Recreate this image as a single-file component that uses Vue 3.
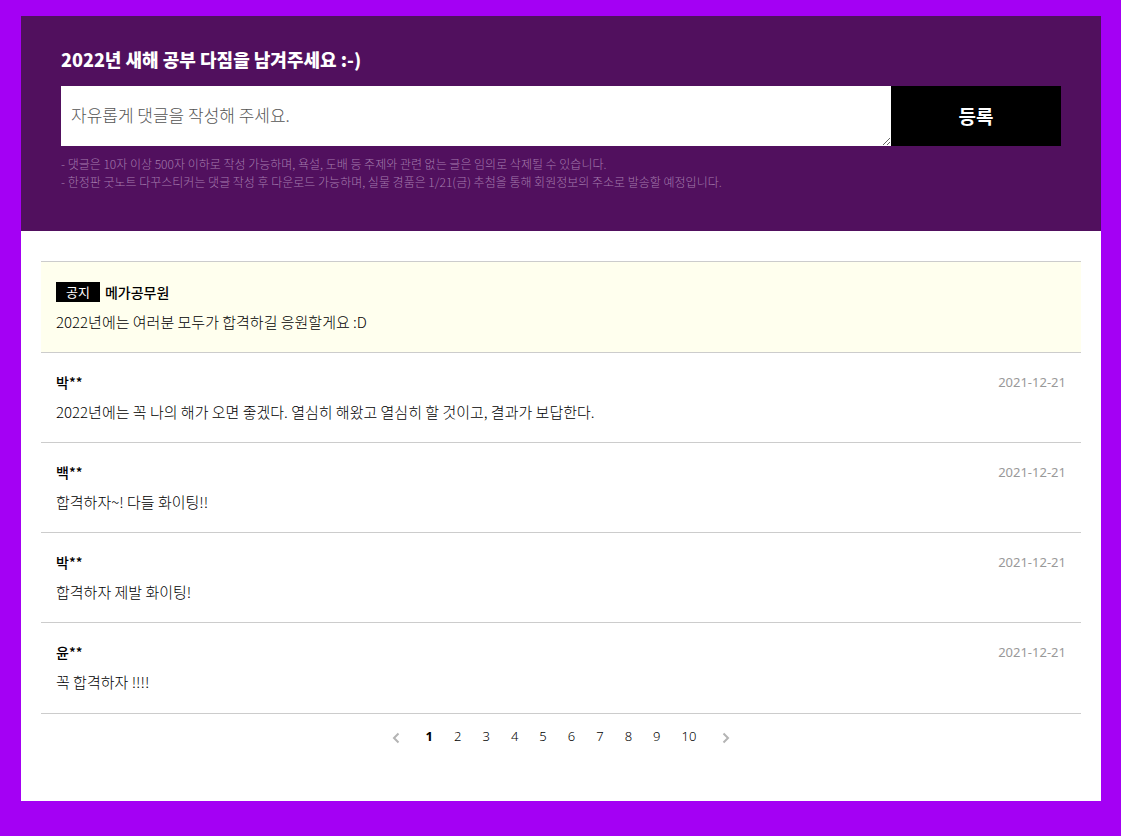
<script setup>
import { ref } from 'vue'

const draft = ref('')
const page = ref(1)
const pages = [1, 2, 3, 4, 5, 6, 7, 8, 9, 10]
const comments = [
  { name: '메가공무원', text: '2022년에는 여러분 모두가 합격하길 응원할게요 :D', notice: true },
  { name: '박**', text: '2022년에는 꼭 나의 해가 오면 좋겠다. 열심히 해왔고 열심히 할 것이고, 결과가 보답한다.', date: '2021-12-21' },
  { name: '백**', text: '합격하자~! 다들 화이팅!!', date: '2021-12-21' },
  { name: '박**', text: '합격하자 제발 화이팅!', date: '2021-12-21' },
  { name: '윤**', text: '꼭 합격하자 !!!!', date: '2021-12-21' }
]
</script>

<template>
  <main class="board">
    <form class="write" @submit.prevent>
      <label class="title" for="comment">2022년 새해 공부 다짐을 남겨주세요 :-)</label>
      <div class="field">
        <textarea id="comment" v-model="draft" class="box" placeholder="자유롭게 댓글을 작성해 주세요."></textarea>
        <button class="submit" type="submit">등록</button>
      </div>
      <p class="hint">- 댓글은 10자 이상 500자 이하로 작성 가능하며, 욕설, 도배 등 주제와 관련 없는 글은 임의로 삭제될 수 있습니다.</p>
      <p class="hint">- 한정판 굿노트 다꾸스티커는 댓글 작성 후 다운로드 가능하며, 실물 경품은 1/21(금) 추첨을 통해 회원정보의 주소로 발송할 예정입니다.</p>
    </form>

    <section class="content">
      <ul class="list">
        <li v-for="(c, i) in comments" :key="i" class="item" :class="{ notice: c.notice }">
          <div class="head">
            <span v-if="c.notice" class="tag">공지</span>
            <strong class="name">{{ c.name }}</strong>
            <time v-if="c.date" class="date" :datetime="c.date">{{ c.date }}</time>
          </div>
          <p class="text">{{ c.text }}</p>
        </li>
      </ul>

      <nav class="pager" aria-label="페이지">
        <a class="arrow" href="#" aria-label="이전" @click.prevent>
          <svg viewBox="0 0 8 12" width="8" height="12"><path d="M6.5 1.5 2 6 6.5 10.5" /></svg>
        </a>
        <a v-for="n in pages" :key="n" class="num" :class="{ on: n === page }" href="#" @click.prevent="page = n">{{ n }}</a>
        <a class="arrow" href="#" aria-label="다음" @click.prevent>
          <svg viewBox="0 0 8 12" width="8" height="12"><path d="M1.5 1.5 6 6 1.5 10.5" /></svg>
        </a>
      </nav>
    </section>
  </main>
</template>

<style>
body {
  background: #a400f4;
}
</style>

<style scoped>
.board {
  margin: 16px 20px 35px 21px;
  background: #fff;
  color: #000;
  font-family: "Noto Sans CJK KR", "Noto Sans", sans-serif;
  font-size: 14px;
  font-weight: 300;
}
.write {
  padding: 28px 40px 40px;
  background: #51105e;
}
.title {
  display: block;
  margin-bottom: 12px;
  color: #fff;
  font-size: 18px;
  font-weight: 900;
  line-height: 30px;
}
.field {
  display: flex;
  height: 60px;
  margin-bottom: 9px;
}
.box {
  box-sizing: border-box;
  flex: 1;
  min-width: 0;
  height: 60px;
  padding: 17px 10px;
  border: 0;
  border-radius: 0;
  outline: 0;
  background: #fff;
  font-family: inherit;
  font-size: 17px;
  font-weight: 300;
  line-height: 24px;
}
.box::placeholder {
  color: #555;
}
.submit {
  width: 17%;
  padding: 0 0 2px;
  border: 0;
  background: #000;
  color: #fff;
  font-family: inherit;
  font-size: 19px;
  font-weight: 700;
}
.hint {
  margin: 0;
  color: #a47bad;
  font-size: 12px;
  line-height: 18px;
}
.content {
  padding: 30px 20px 50px;
}
.list {
  margin: 0;
  padding: 0;
  border-top: 1px solid #ccc;
  list-style: none;
}
.item {
  padding: 18px 15px 20px;
  border-bottom: 1px solid #ccc;
}
.item:first-child {
  padding-top: 19px;
}
.item:last-child {
  padding-bottom: 21px;
}
.notice {
  background: #ffffee;
}
.head {
  display: flex;
  align-items: center;
  gap: 5px;
  height: 22px;
  margin-bottom: 8px;
}
.tag {
  padding: 0 10px;
  background: #000;
  color: #fff;
  font-size: 13px;
  font-weight: 400;
  line-height: 20px;
}
.name {
  font-weight: 500;
  line-height: 20px;
}
.date {
  margin-left: auto;
  color: #999;
  font-family: "Noto Sans", sans-serif;
  font-size: 13px;
  font-weight: 400;
}
.text {
  margin: 0;
  font-size: 15px;
  line-height: 21px;
}
.pager {
  display: flex;
  align-items: center;
  justify-content: center;
  gap: 21px;
  height: 37px;
  padding-top: 7px;
  box-sizing: border-box;
}
.num {
  color: #000;
  font-family: "Noto Sans", sans-serif;
  font-size: 13px;
  font-weight: 300;
  line-height: 20px;
  text-decoration: none;
}
.on {
  font-weight: 700;
}
.arrow {
  display: flex;
  padding: 4px 5px 0;
}
.arrow path {
  fill: none;
  stroke: #b4b4b4;
  stroke-width: 2;
}
</style>
